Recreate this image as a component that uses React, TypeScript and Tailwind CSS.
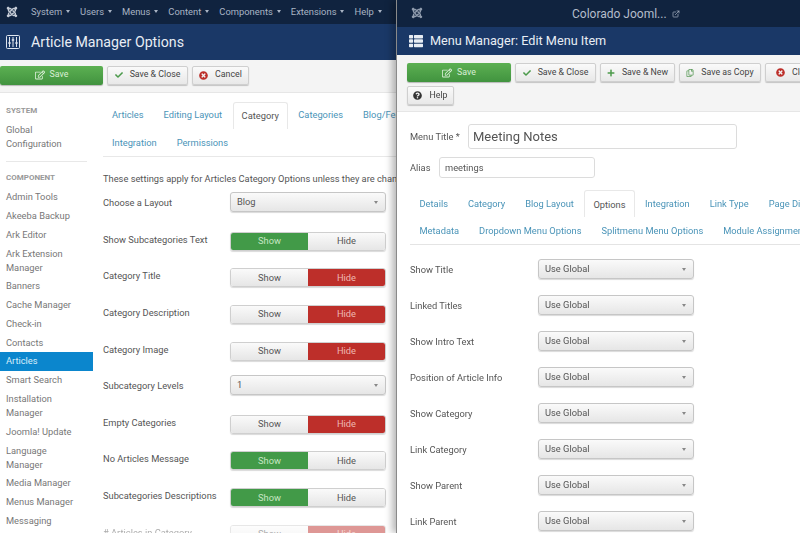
import React from "react";
import { FaJoomla, FaThList, FaRegEdit, FaCheck, FaTimesCircle, FaPlus, FaRegCopy, FaQuestionCircle } from "react-icons/fa";
import { ExternalLink } from "lucide-react";

const Btn = ({ icon, label, cls = "" }: { icon: React.ReactNode; label: string; cls?: string }) => (
  <div className={`h-[19px] shrink-0 flex items-center justify-center gap-[7px] rounded-[2px] border border-[#cfcfcf] bg-gradient-to-b from-[#fafafa] to-[#e8e8e8] text-[8.8px] text-[#444] shadow-[0_1px_1px_rgba(0,0,0,0.2)] ${cls}`}>
    {icon}
    <span>{label}</span>
  </div>
);

const SaveBtn = ({ cls }: { cls: string }) => (
  <div className={`h-[19px] shrink-0 flex items-center justify-center gap-[5px] rounded-[2px] bg-gradient-to-b from-[#5cb052] to-[#41933f] text-[8.8px] text-[#d9eed6] shadow-[0_1px_1px_rgba(0,0,0,0.25)] ${cls}`}>
    <FaRegEdit className="w-[10px] h-[10px]" />
    <span>Save</span>
  </div>
);

const Tab = ({ label, active = false, textPad = "pt-[6px]" }: { label: string; active?: boolean; textPad?: string }) =>
  active ? (
    <div className={`h-[27px] px-[8px] shrink-0 border border-b-0 border-[#e8e8e8] rounded-t-[3px] bg-white text-[#555] mb-[-1px] relative z-10 leading-[14px] ${textPad}`}>{label}</div>
  ) : (
    <div className={`h-[27px] px-[9.5px] shrink-0 text-[#4a94b8] leading-[14px] ${textPad}`}>{label}</div>
  );

const Select = ({ value, cls }: { value: string; cls: string }) => (
  <div className={`h-[20px] flex items-center justify-between pl-[6px] pr-[7px] rounded-[3px] border border-[#c6c6c6] bg-gradient-to-b from-[#fafafa] to-[#e6e6e6] text-[#555] shadow-[0_1px_1px_rgba(0,0,0,0.15)] ${cls}`}>
    <span>{value}</span>
    <span className="w-0 h-0 border-x-[2.5px] border-x-transparent border-t-[3.5px] border-t-[#888]" />
  </div>
);

const Toggle = ({ on }: { on: "show" | "hide" }) => (
  <div className="w-[156px] h-[19px] flex rounded-[3px] overflow-hidden border border-[#cfcfcf] shadow-[0_1px_1px_rgba(0,0,0,0.15)]">
    <div className={`w-[78px] flex items-center justify-center ${on === "show" ? "bg-[#429a48] text-[#c6e6c3]" : "bg-gradient-to-b from-[#fafafa] to-[#e6e6e6] text-[#555]"}`}>Show</div>
    <div className={`w-[78px] flex items-center justify-center ${on === "hide" ? "bg-[#bd2f2a] text-[#efb9b2]" : "bg-gradient-to-b from-[#fafafa] to-[#e6e6e6] text-[#555]"}`}>Hide</div>
  </div>
);

const LeftRow = ({ label, children, top }: { label: string; children: React.ReactNode; top: string }) => (
  <div className="h-[36.65px] flex shrink-0">
    <div className="w-[127px] shrink-0 pt-[3px] leading-[14px] text-[#555]">{label}</div>
    <div className={top}>{children}</div>
  </div>
);

const sideTop = ["Admin Tools", "Akeeba Backup", "Ark Editor", "Ark Extension\nManager", "Banners", "Cache Manager", "Check-in", "Contacts"];
const sideBottom = ["Smart Search", "Installation\nManager", "Joomla! Update", "Language\nManager", "Media Manager", "Menus Manager", "Messaging"];

const SideItem = ({ label, active = false }: { label: string; active?: boolean }) => (
  <div className={`px-[6px] py-[2.4px] leading-[14px] whitespace-pre-line ${active ? "bg-[#0b86cd] text-[#d8eefa]" : "text-[#777]"}`}>{label}</div>
);

const rightRows = ["Show Title", "Linked Titles", "Show Intro Text", "Position of Article Info", "Show Category", "Link Category", "Show Parent", "Link Parent"];

export default function App() {
  return (
    <div className="relative w-[800px] h-[533px] overflow-hidden bg-white text-[9.3px] blur-[0.3px] font-['Roboto',Arial,sans-serif]">
      {/* Left window */}
      <div className="w-[800px] h-[533px] flex flex-col">
        <div className="h-[24px] shrink-0 bg-[#10233f] flex items-center pl-[6px] text-[#a9b4c4]">
          <FaJoomla className="w-[12px] h-[12px] text-[#c5ccd6] mr-[13px]" />
          {["System", "Users", "Menus", "Content", "Components", "Extensions", "Help"].map((m) => (
            <div key={m} className="flex items-center gap-[4px] mr-[10px] text-[9.4px]">
              <span>{m}</span>
              <span className="w-0 h-0 border-x-[2.5px] border-x-transparent border-t-[3px] border-t-[#a9b4c4]" />
            </div>
          ))}
        </div>
        <div className="h-[36px] shrink-0 bg-[#1a3867] flex items-center pl-[6px] text-[#e8edf4]">
          <svg viewBox="0 0 14 14" className="w-[14px] h-[14px] mr-[11px]" fill="none" stroke="#dfe5ee" strokeWidth="1">
            <rect x="0.5" y="0.5" width="13" height="13" rx="1" />
            <path d="M3.5 2v10M7 2v10M10.5 2v10" />
            <path d="M2.3 8h2.4M5.8 5h2.4M9.3 8h2.4" strokeWidth="1.6" />
          </svg>
          <span className="text-[14.2px] pt-[1px]">Article Manager Options</span>
        </div>
        <div className="h-[33px] shrink-0 bg-[#f4f4f4] border-b border-[#e6e6e6] flex items-center gap-[4px] pb-[2px]">
          <SaveBtn cls="w-[103px]" />
          <Btn cls="w-[81px]" icon={<FaCheck className="w-[8px] h-[8px] text-[#4c9a4b]" />} label="Save & Close" />
          <Btn cls="w-[57px]" icon={<FaTimesCircle className="w-[9px] h-[9px] text-[#bd2f2a]" />} label="Cancel" />
        </div>
        <div className="flex-1 flex min-h-0">
          <div className="w-[93px] shrink-0 pt-[11px]">
            <div className="px-[6px] text-[8px] font-bold leading-[14px] text-[#999] mb-[3px]">SYSTEM</div>
            <SideItem label={"Global\nConfiguration"} />
            <div className="h-px mx-[6px] bg-[#e8e8e8] mt-[7px] mb-[9px]" />
            <div className="px-[6px] text-[8px] font-bold leading-[14px] text-[#999] mb-[3px]">COMPONENT</div>
            {sideTop.map((s) => <SideItem key={s} label={s} />)}
            <SideItem label="Articles" active />
            {sideBottom.map((s) => <SideItem key={s} label={s} />)}
          </div>
          <div className="flex-1 pl-[10px] pt-[9px] min-w-0">
            <div className="border-b border-[#e8e8e8] mb-[15px] overflow-hidden">
              <div className="flex gap-[1px] h-[27px] -ml-[0.5px]">
                <Tab label="Articles" />
                <Tab label="Editing Layout" />
                <Tab label="Category" active />
                <Tab label="Categories" />
                <Tab label="Blog/Featured Layouts" />
              </div>
              <div className="flex gap-[1px] h-[27px] pt-[1px] -ml-[0.5px]">
                <Tab label="Integration" />
                <Tab label="Permissions" />
              </div>
            </div>
            <div className="leading-[14px] h-[21px] text-[#555] whitespace-nowrap">These settings apply for Articles Category Options unless they are changed for a specific menu item</div>
            <LeftRow label="Choose a Layout" top="-mt-[1px]"><Select value="Blog" cls="w-[156px]" /></LeftRow>
            <LeftRow label="Show Subcategories Text" top="pt-[2px]"><Toggle on="show" /></LeftRow>
            <LeftRow label="Category Title" top="pt-[2px]"><Toggle on="hide" /></LeftRow>
            <LeftRow label="Category Description" top="pt-[2px]"><Toggle on="hide" /></LeftRow>
            <LeftRow label="Category Image" top="pt-[2px]"><Toggle on="hide" /></LeftRow>
            <LeftRow label="Subcategory Levels" top="-mt-[1px]"><Select value="1" cls="w-[156px]" /></LeftRow>
            <LeftRow label="Empty Categories" top="pt-[2px]"><Toggle on="hide" /></LeftRow>
            <LeftRow label="No Articles Message" top="pt-[2px]"><Toggle on="show" /></LeftRow>
            <LeftRow label="Subcategories Descriptions" top="pt-[2px]"><Toggle on="show" /></LeftRow>
            <div className="opacity-50">
              <LeftRow label="# Articles in Category" top="pt-[2px]"><Toggle on="hide" /></LeftRow>
            </div>
          </div>
        </div>
      </div>

      {/* Right window */}
      <div className="absolute left-[396px] top-0 w-[404px] h-[533px] flex flex-col bg-white border-l border-[#8a8a8a] shadow-[-4px_0_7px_rgba(0,0,0,0.28)]">
        <div className="h-[27px] shrink-0 bg-[#10233f] relative flex items-center pl-[175px] text-[#b4bdcb]">
          <FaJoomla className="absolute left-[14px] top-[7px] w-[12px] h-[12px] text-[#8f9bad]" />
          <span className="text-[12px] flex items-center gap-[5px]">Colorado Jooml...<ExternalLink className="w-[8px] h-[8px]" /></span>
        </div>
        <div className="h-[28px] shrink-0 bg-[#1a3867] flex items-center pl-[12px] text-[#e8edf4]">
          <FaThList className="w-[14px] h-[14px] mr-[7px]" />
          <span className="text-[12.7px]">Menu Manager: Edit Menu Item</span>
        </div>
        <div className="h-[57px] shrink-0 bg-[#f4f4f4] border-b border-[#e6e6e6] pl-[10px] pt-[8px] flex flex-col gap-[4px]">
          <div className="flex gap-[4px] w-[500px]">
            <SaveBtn cls="w-[104px]" />
            <Btn cls="w-[81px]" icon={<FaCheck className="w-[8px] h-[8px] text-[#4c9a4b]" />} label="Save & Close" />
            <Btn cls="w-[75px]" icon={<FaPlus className="w-[8px] h-[8px] text-[#4c9a4b]" />} label="Save & New" />
            <Btn cls="w-[82px]" icon={<FaRegCopy className="w-[8px] h-[8px] text-[#5d9c5b]" />} label="Save as Copy" />
            <Btn cls="w-[60px]" icon={<FaTimesCircle className="w-[9px] h-[9px] text-[#bd2f2a]" />} label="Close" />
          </div>
          <Btn cls="w-[47px]" icon={<FaQuestionCircle className="w-[9px] h-[9px] text-[#333]" />} label="Help" />
        </div>
        <div className="flex-1 pl-[13px] pt-[12px] min-h-0">
          <div className="flex items-center h-[25px] mb-[8px]">
            <div className="w-[58px] text-[#555]">Menu Title *</div>
            <div className="w-[269px] h-[25px] flex items-center px-[4px] text-[13px] text-[#555] border border-[#dcdcdc] rounded-[3px]">Meeting Notes</div>
          </div>
          <div className="flex items-center h-[21px] mb-[12px]">
            <div className="w-[29px] text-[#555]">Alias</div>
            <div className="w-[156px] h-[21px] flex items-center px-[5px] text-[#555] border border-[#dcdcdc] rounded-[3px]">meetings</div>
          </div>
          <div className="border-b border-[#e4e4e4] mb-[14px] overflow-hidden whitespace-nowrap">
            <div className="flex gap-[1px] h-[27px]">
              <Tab textPad="pt-[7px]" label="Details" />
              <Tab textPad="pt-[7px]" label="Category" />
              <Tab textPad="pt-[7px]" label="Blog Layout" />
              <Tab textPad="pt-[7px]" label="Options" active />
              <Tab textPad="pt-[7px]" label="Integration" />
              <Tab textPad="pt-[7px]" label="Link Type" />
              <Tab textPad="pt-[7px]" label="Page Display" />
            </div>
            <div className="flex gap-[1px] h-[27px]">
              <Tab textPad="pt-[7px]" label="Metadata" />
              <Tab textPad="pt-[7px]" label="Dropdown Menu Options" />
              <Tab textPad="pt-[7px]" label="Splitmenu Menu Options" />
              <Tab textPad="pt-[7px]" label="Module Assignment" />
            </div>
          </div>
          {rightRows.map((r) => (
            <div key={r} className="h-[36px] flex items-start">
              <div className="w-[128px] shrink-0 pt-[4px] leading-[14px] text-[#555]">{r}</div>
              <Select value="Use Global" cls="w-[156px]" />
            </div>
          ))}
        </div>
      </div>
    </div>
  );
}
